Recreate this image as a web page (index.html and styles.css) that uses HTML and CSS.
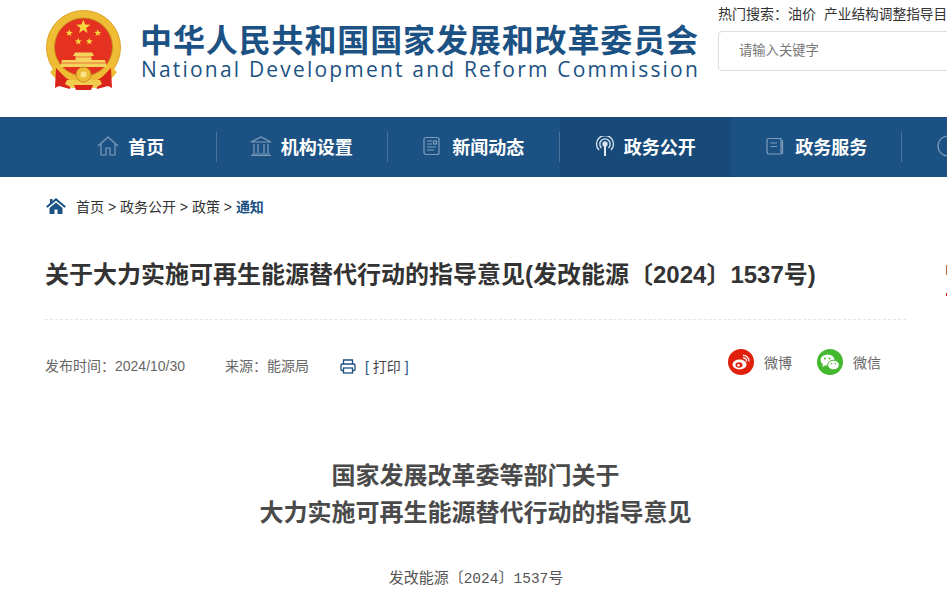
FILE: index.html
```html
<!DOCTYPE html>
<html lang="zh-CN">

<head>
  <meta charset="UTF-8" />
  <title>关于大力实施可再生能源替代行动的指导意见</title>
  <link rel="stylesheet" href="styles.css">
</head>

<body>
  <div class="top">
    <svg class="emblem" viewBox="0 0 76 80" width="76" height="80">
      <defs>
        <polygon id="star" points="0,-5 1.2,-1.6 4.8,-1.5 1.9,0.6 2.9,4 0,2 -2.9,4 -1.9,0.6 -4.8,-1.5 -1.2,-1.6" />
      </defs>
      <circle cx="38.500" cy="37.500" r="37" fill="#efbd35" stroke="#dba123" stroke-width="1" />
      <circle cx="38.500" cy="37" r="29" fill="#e5311f" stroke="#c98a1c" stroke-width="1" />
      <use href="#star" fill="#f8d63e" transform="translate(38.300 17) scale(1.500)" />
      <use href="#star" fill="#f8d63e" transform="translate(24.300 23) scale(.75)" />
      <use href="#star" fill="#f8d63e" transform="translate(33.300 31.500) scale(.75)" />
      <use href="#star" fill="#f8d63e" transform="translate(44.300 31.500) scale(.75)" />
      <use href="#star" fill="#f8d63e" transform="translate(52.700 23) scale(.75)" />
      <path d="M30 42.500 H47 L49 46 H46.500 V50 H60 L62 57 H15 L17 50 H30.500 V46 H28 Z" fill="#f5d45e" />
      <path d="M16 53 H61 M20 47 H57" stroke="#e5311f" stroke-width=".6" />
      <path d="M10 57 C16 66 28 68 38.500 68 C49 68 61 66 67 57 L72 62 C66 72 52 76 38.500 76 C25 76 11 72 5 62 Z" fill="#efbd35" />
      <path d="M11 58 L15 62 C20 68 24 70 27 71 L25 79 L14 76 L10 78 Z" fill="#d9231b" />
      <path d="M66 58 L62 62 C57 68 53 70 50 71 L52 79 L63 76 L67 78 Z" fill="#d9231b" />
      <path d="M22 70 L55 70 L57 74 L50 78 H27 L20 74 Z" fill="#f2cc4d" />
      <path d="M29 75 H48 L46 80 H31 Z" fill="#d9231b" />
      <circle cx="38.500" cy="64.500" r="7.500" fill="#efbd35" stroke="#b9801b" stroke-width=".8" />
      <circle cx="38.500" cy="64.500" r="3" fill="#f8e08a" />
    </svg>
    <div class="site-name">
      <div class="cn">中华人民共和国国家发展和改革委员会</div>
      <div class="en">National Development and Reform Commission</div>
    </div>
    <div class="search-box">
      <div class="hot">
        <span>热门搜索：</span><span class="hot-item">油价</span><span class="hot-long">产业结构调整指导目</span>
      </div>
      <div class="search-input">请输入关键字</div>
    </div>
  </div>

  <ul class="nav">
    <li class="nav-item">
      <svg viewBox="0 0 22 20" width="22" height="20" fill="none" stroke="#7f9dbb" stroke-width="1.200">
        <path d="M1 10 L11 1 L21 10 M4 8 V19 H9 V12 H13 V19 H18 V8" />
      </svg>
      <span>首页</span>
    </li>
    <li class="nav-item second">
      <svg viewBox="0 0 22 20" width="22" height="20" fill="none" stroke="#7f9dbb" stroke-width="1.200">
        <path d="M1 6 L11 1 L21 6 Z M4 8 V17 M8 8 V17 M14 8 V17 M18 8 V17 M2 18 H20 M1 19.500 H21" />
      </svg>
      <span>机构设置</span>
    </li>
    <li class="nav-item">
      <svg viewBox="0 0 18 20" width="18" height="20" fill="none" stroke="#7f9dbb" stroke-width="1.200">
        <rect x="1" y="1.500" width="15" height="17" rx="2" />
        <path d="M4 5 H9 M4 8 H9 M4 11 H13 M4 14 H11" />
        <rect x="10.500" y="5" width="3" height="3" />
      </svg>
      <span class="nudge">新闻动态</span>
    </li>
    <li class="nav-item active">
      <svg viewBox="0 0 20 20" width="20" height="20" fill="none" stroke="#dfe8f0" stroke-width="1.300">
        <path d="M4 14 A8.500 8.500 0 1 1 16 14 M6.500 12 A5.200 5.200 0 1 1 13.500 12" />
        <circle cx="10" cy="8" r="2" fill="#dfe8f0" />
        <path d="M10 9 V20" stroke-width="2" />
      </svg>
      <span>政务公开</span>
    </li>
    <li class="nav-item fifth">
      <svg viewBox="0 0 18 20" width="18" height="20" fill="none" stroke="#7f9dbb" stroke-width="1.200">
        <path d="M15 2.500 H3 Q1 2.500 1 4.500 V16 Q1 18 3 18 H15 Z M16.500 4 V18" />
        <path d="M4.500 7 H11 M4.500 10.500 H11" />
      </svg>
      <span class="nudge">政务服务</span>
    </li>
    <li class="nav-item last">
      <svg viewBox="0 0 22 22" width="22" height="22" fill="none" stroke="#7f9dbb" stroke-width="1.200">
        <circle cx="11" cy="11" r="10" />
        <path d="M11 5 V11 H16" />
      </svg>
    </li>
  </ul>

  <div class="crumb">
    <svg viewBox="0 0 20 16" width="20" height="16" fill="#1c5283">
      <path d="M10 0 L20 8.500 L18.500 9.800 L10 2.800 L1.500 9.800 L0 8.500 L4 5 V1 H6.500 V3 Z" />
      <path d="M3.500 10 L10 4.500 L16.500 10 V16 H11.500 V11.500 H8.500 V16 H3.500 Z" />
    </svg>
    <span class="crumb-text">首页 &gt; 政务公开 &gt; 政策 &gt; <b>通知</b></span>
  </div>

  <h1 class="title">关于大力实施可再生能源替代行动的指导意见(发改能源〔2024〕1537号)</h1>

  <div class="meta">
    <span class="meta-date">发布时间：2024/10/30</span>
    <span class="meta-source">来源：能源局</span>
    <svg class="print-icon" viewBox="0 0 16 15" width="16" height="15" fill="none" stroke="#1c5283" stroke-width="1.300">
      <path d="M3.500 5 V1 H12.500 V5 M3.500 11.500 H2 Q1 11.500 1 10.500 V6 Q1 5 2 5 H14 Q15 5 15 6 V10.500 Q15 11.500 14 11.500 H12.500" />
      <rect x="3.500" y="9" width="9" height="5" />
    </svg>
    <span class="print"><i>[</i> 打印 <i>]</i></span>
    <div class="share">
      <span class="share-icon weibo">
        <svg viewBox="0 0 18 16" width="18" height="16">
          <ellipse cx="7.500" cy="10.500" rx="7" ry="5" fill="#fff" />
          <ellipse cx="7" cy="11" rx="3.500" ry="2.800" fill="#e0200b" />
          <circle cx="6.500" cy="11.200" r="1.300" fill="#fff" />
          <path d="M11 1.500 A5.500 5.500 0 0 1 17 7.500 M11 4 A3 3 0 0 1 14.500 7.500" fill="none" stroke="#fff" stroke-width="1.300" />
        </svg>
      </span>
      <span class="share-label">微博</span>
      <span class="share-icon wechat">
        <svg viewBox="0 0 20 17" width="20" height="17" fill="#fff">
          <ellipse cx="7.500" cy="6" rx="7" ry="5.500" />
          <path d="M3 9 L2.500 13 L6.500 10.500 Z" />
          <ellipse cx="13.500" cy="11" rx="5.800" ry="4.800" stroke="#44b82f" stroke-width="1" />
          <circle cx="5" cy="4.500" r="1" fill="#44b82f" />
          <circle cx="9.500" cy="4.500" r="1" fill="#44b82f" />
          <circle cx="11.500" cy="9.800" r=".8" fill="#44b82f" />
          <circle cx="15.500" cy="9.800" r=".8" fill="#44b82f" />
        </svg>
      </span>
      <span class="share-label">微信</span>
    </div>
  </div>

  <div class="article">
    <h2 class="article-title">国家发展改革委等部门关于<br>大力实施可再生能源替代行动的指导意见</h2>
    <p class="doc-no">发改能源〔<span class="num">2024</span>〕<span class="num">1537</span>号</p>
  </div>

  <div class="edge edge-a"></div>
  <div class="edge edge-b"></div>
</body>

</html>
```

FILE: styles.css
```css
html,
body {
  overflow: hidden;
}

body {
  margin: 0;
  width: 947px;
  height: 599px;
  background: #fff;
  font-family: "Liberation Sans", "Noto Sans CJK SC", sans-serif;
  color: #333;
}

.top {
  height: 117px;
  display: flex;
  padding-left: 45px;
  overflow: hidden;
}

.emblem {
  flex: none;
  margin-top: 10px;
}

.site-name {
  flex: none;
  margin-left: 19px;
  width: 563px;
  color: #1c5283;
}

.cn {
  margin-top: 24px;
  font-size: 32px;
  line-height: 34px;
  font-weight: 700;
  letter-spacing: 0.88px;
  white-space: nowrap;
}

.en {
  margin-left: 1px;
  font-family: "Open Sans", sans-serif;
  font-size: 21px;
  line-height: 22px;
  letter-spacing: 2.19px;
  white-space: nowrap;
}

.search-box {
  flex: none;
  margin-left: 15px;
  width: 300px;
}

.hot {
  margin-top: 6px;
  font-size: 14px;
  line-height: 16px;
  white-space: nowrap;
}

.hot-item {
  margin-right: 8px;
}

.hot-long {
  font-size: 13.700px;
}

.search-input {
  margin-top: 8px;
  height: 38px;
  line-height: 38px;
  padding-left: 20px;
  border: 1px solid #ddd;
  border-radius: 4px;
  font-size: 13.300px;
  color: #777;
}

.nav {
  list-style: none;
  margin: 0;
  padding: 0 0 0 45px;
  height: 60px;
  display: flex;
  background: #1c5283;
  overflow: hidden;
}

.nav-item {
  flex: none;
  width: 171.500px;
  height: 60px;
  box-sizing: border-box;
  padding-bottom: 2px;
  display: flex;
  align-items: center;
  justify-content: center;
  gap: 9px;
  position: relative;
  color: #fff;
  font-size: 18px;
  font-weight: 700;
}

.nav-item::after {
  content: "";
  position: absolute;
  right: 0;
  top: 15px;
  height: 30px;
  width: 1px;
  background: #4a7399;
}

.second {
  padding-right: 2px;
}

.fifth::after {
  right: 1px;
}

.nudge {
  margin-left: 2px;
}

.active {
  background: #174a78;
}

.active::after,
.last::after {
  display: none;
}

.last {
  justify-content: flex-start;
  padding-left: 34px;
}

.crumb {
  margin: 20px 0 0 46px;
  height: 18px;
  display: flex;
  align-items: center;
  gap: 10px;
  font-size: 14px;
}

.crumb b {
  color: #1c5283;
}

.title {
  margin: 43px 41px 0 45px;
  padding-bottom: 27px;
  border-bottom: 1px dashed #e5e5e5;
  font-size: 24px;
  line-height: 34px;
  font-weight: 700;
  white-space: nowrap;
}

.meta {
  margin: 30px 0 0 45px;
  height: 30px;
  display: flex;
  align-items: center;
  font-size: 14px;
  color: #666;
}

.meta-source {
  margin-left: 40px;
}

.print-icon {
  margin-left: 31px;
  margin-top: 2px;
}

.print {
  margin-left: 9px;
  margin-top: 2px;
  color: #444;
}

.print i {
  font-style: normal;
  color: #1c5283;
}

.share {
  margin-left: auto;
  margin-right: 66px;
  margin-bottom: 6px;
  display: flex;
  align-items: center;
}

.share-icon {
  width: 26px;
  height: 26px;
  border-radius: 50%;
  display: flex;
  align-items: center;
  justify-content: center;
}

.weibo {
  background: #e0200b;
}

.wechat {
  margin-left: 25px;
  background: #44b82f;
}

.share-label {
  margin-left: 10px;
}

.article {
  margin-top: 77px;
  text-align: center;
}

.article-title {
  margin: 0;
  width: 951px;
  font-size: 24px;
  line-height: 37px;
  font-weight: 700;
  color: #4a4a4a;
}

.doc-no {
  margin: 35px 0 0;
  width: 952px;
  font-size: 15px;
  line-height: 24px;
  color: #555;
}

.num {
  font-family: "Liberation Mono", monospace;
  font-size: 14.500px;
}

/* slivers of a floating box clipped by the window */
.edge {
  position: absolute;
  left: 946px;
  width: 1px;
}

.edge-a {
  top: 265px;
  height: 10px;
  background: #b8682e;
}

.edge-b {
  top: 293px;
  height: 3px;
  background: #d2141a;
}
```
